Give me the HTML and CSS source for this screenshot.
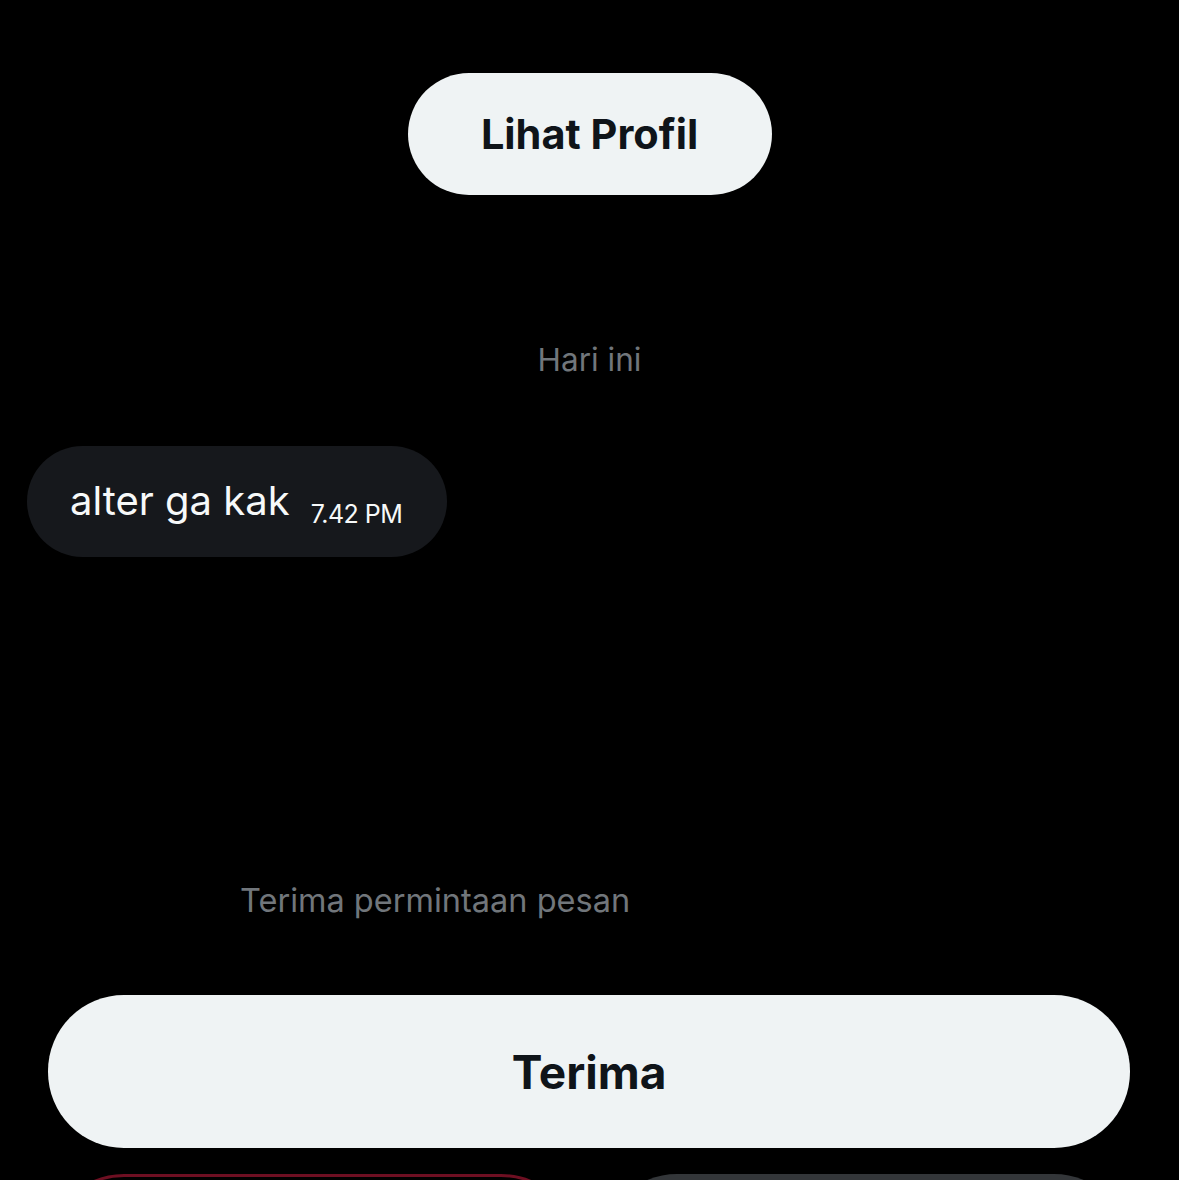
FILE: index.html
```html
<!DOCTYPE html>
<html lang="id">
<head>
<meta charset="utf-8">
<title>Pesan</title>
<link rel="stylesheet" href="styles.css">
</head>
<body>
<div class="screen">
  <div class="profile-row">
    <button class="btn-profile">Lihat Profil</button>
  </div>
  <div class="day">Hari ini</div>
  <div class="msg-row">
    <div class="bubble">
      <span class="msg-text">alter ga kak</span>
      <span class="msg-time">7.42 PM</span>
    </div>
  </div>
  <div class="spacer"></div>
  <div class="request-label">Terima permintaan pesan</div>
  <div class="accept-row">
    <button class="btn-accept">Terima</button>
  </div>
  <div class="bottom-row">
    <div class="btn-delete"></div>
    <div class="btn-block"></div>
  </div>
</div>
</body>
</html>
```

FILE: styles.css
```css
html, body {
  margin: 0;
  padding: 0;
  background: #000;
  height: 100%;
  overflow: hidden;
}
.screen {
  width: 1179px;
  height: 1180px;
  display: flex;
  flex-direction: column;
  font-family: "Inter", "Liberation Sans", sans-serif;
  color: #e7e9ea;
  overflow: hidden;
}
.screen > * {
  flex-shrink: 0;
}
.profile-row {
  display: flex;
  justify-content: center;
  padding-top: 73px;
}
.btn-profile {
  width: 364px;
  height: 122px;
  border: none;
  border-radius: 61px;
  background: #eff3f4;
  color: #0f1419;
  font-family: inherit;
  font-size: 41.5px;
  font-weight: 700;
  padding: 0;
}
.day {
  margin-top: 140px;
  text-align: center;
  color: #71767b;
  font-size: 31.5px;
  line-height: 50px;
}
.msg-row {
  margin-top: 61px;
  padding-left: 27px;
  display: flex;
}
.bubble {
  width: 420px;
  height: 111px;
  box-sizing: border-box;
  border-radius: 56px;
  background: #16181c;
  display: flex;
  align-items: flex-start;
  padding: 35px 0 0 43px;
}
.msg-text {
  font-size: 40px;
  line-height: 40px;
  color: #f7f9f9;
}
.msg-time {
  font-size: 25px;
  line-height: 25px;
  letter-spacing: -0.5px;
  color: #f7f9f9;
  margin-left: 21px;
  margin-top: 21px;
}
.spacer {
  height: 319px;
}
.request-label {
  padding-left: 240px;
  color: #71767b;
  font-size: 32.5px;
  line-height: 50px;
}
.accept-row {
  margin-top: 69px;
  padding-left: 48px;
  display: flex;
}
.btn-accept {
  width: 1082px;
  height: 153px;
  border: none;
  border-radius: 76px;
  background: #eff3f4;
  color: #0f1419;
  font-family: inherit;
  font-size: 46px;
  font-weight: 700;
  padding: 0;
}
.bottom-row {
  margin-top: 26px;
  display: flex;
  padding-left: 48px;
  gap: 24px;
}
.btn-delete {
  width: 529px;
  height: 153px;
  box-sizing: border-box;
  border: 3px solid #6e0f22;
  border-radius: 76px;
  flex: none;
}
.btn-block {
  width: 529px;
  height: 153px;
  border-radius: 76px;
  background: #333639;
  flex: none;
}
```
